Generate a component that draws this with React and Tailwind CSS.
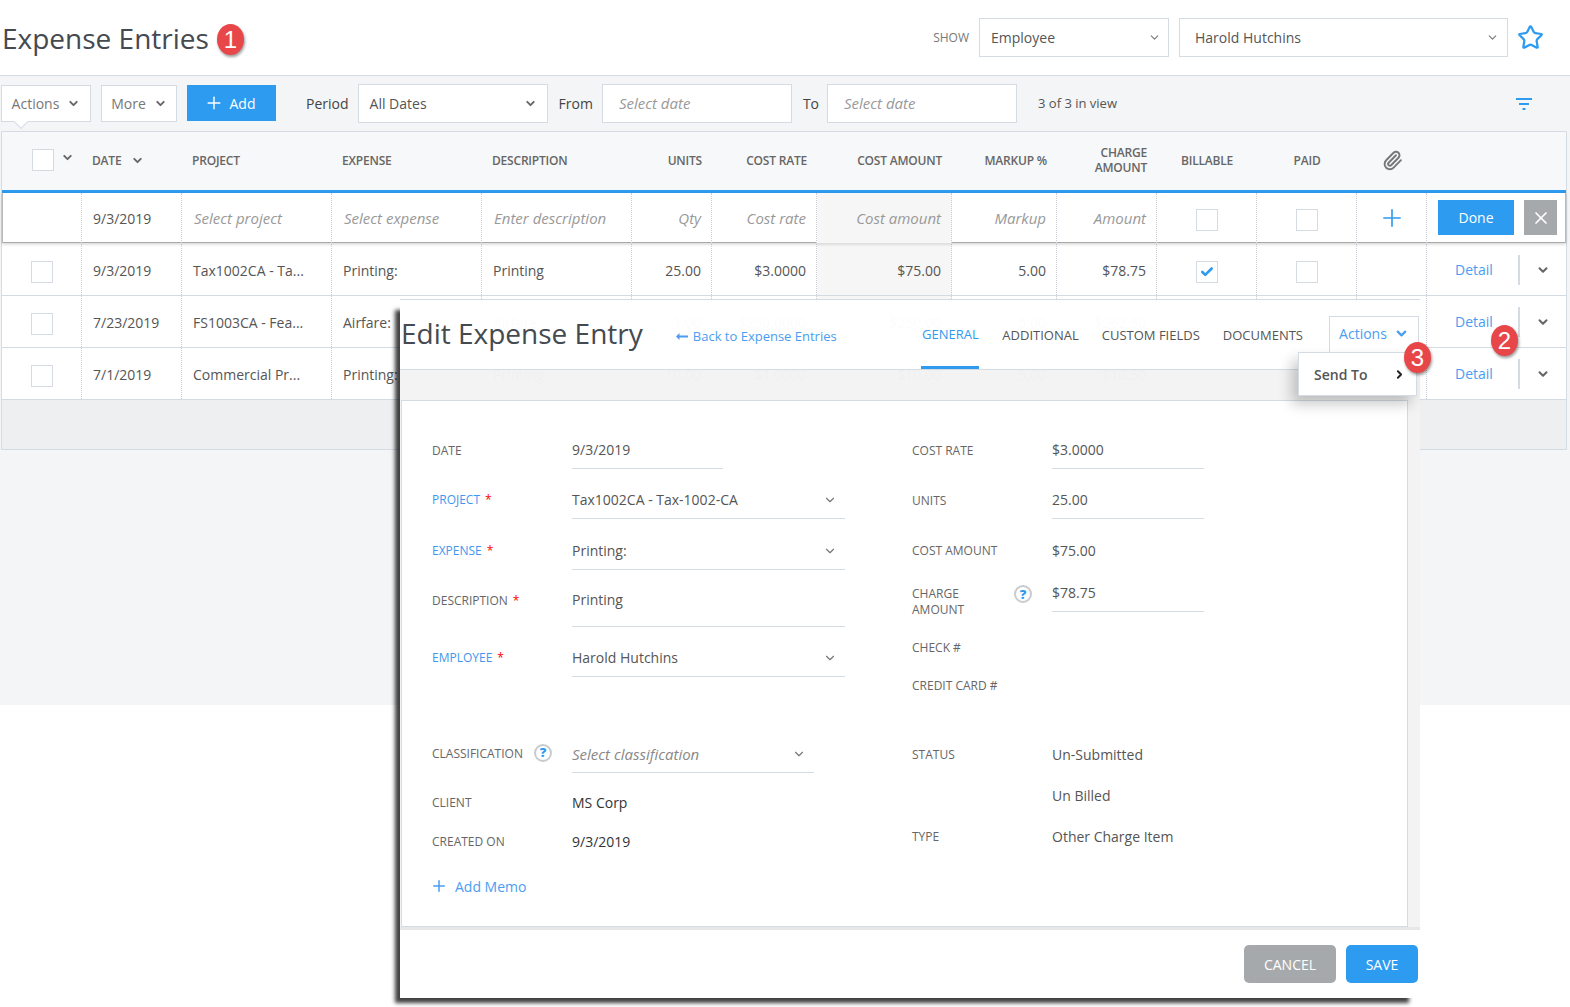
import { ChevronDown, ChevronRight, Check, Paperclip, Plus, Star, X } from 'lucide-react';

const COLS = 'grid grid-cols-[80px_100px_150px_150px_150px_80px_105px_135px_105px_100px_100px_100px_70px_139px]';

const ROWS = [
  { date: '9/3/2019', project: 'Tax1002CA - Ta...', expense: 'Printing:', desc: 'Printing', units: '25.00', rate: '$3.0000', cost: '$75.00', markup: '5.00', amount: '$78.75', billable: true },
  { date: '7/23/2019', project: 'FS1003CA - Fea...', expense: 'Airfare:', desc: 'Airfare', units: '1.00', rate: '$250.0000', cost: '$250.00', markup: '5.00', amount: '$262.50' },
  { date: '7/1/2019', project: 'Commercial Pr...', expense: 'Printing:', desc: 'Printing', units: '10.00', rate: '$1.0000', cost: '$10.00', markup: '5.00', amount: '$10.50' },
];

function Badge({ n, className }) {
  return (
    <div className={`absolute z-30 flex h-[31px] w-[27px] items-center justify-center rounded-[50%] bg-[#e8474a] text-[24px] text-white shadow-[1px_2px_3px_rgba(0,0,0,0.4)] font-['Liberation_Sans',sans-serif] ${className}`}>
      {n}
    </div>
  );
}

function Box({ checked, className = '' }) {
  return (
    <div className={`flex h-[22px] w-[22px] items-center justify-center border border-[#d5dbe3] bg-white ${className}`}>
      {checked && <Check size={14} strokeWidth={4.5} className="text-[#2d9bf0]" />}
    </div>
  );
}

function Help({ className = '' }) {
  return (
    <span className={`flex h-[18px] w-[18px] items-center justify-center rounded-full border-2 border-[#c8cbcf] text-[13px] font-extrabold text-[#2d9bf0] ${className}`}>?</span>
  );
}

function Cell({ children, className = '' }) {
  return <div className={`flex items-center border-r border-dotted border-[#c9ced6] ${className}`}>{children}</div>;
}

function Field({ label, value, req, blue, arrow, width = 'w-[273px]', height = 'h-[50px]', pad = 'pb-[8px]', lift = 'mb-px', muted }) {
  return (
    <div className={`flex items-end ${height}`}>
      <div className={`w-[140px] text-[12px] leading-5 ${pad} ${lift} ${blue ? 'text-[#3f97ee]' : 'text-[#666]'}`}>
        {label}
        {req && <span className="ml-[5px] text-[#f00]">*</span>}
      </div>
      <div className={`flex items-center justify-between border-b border-[#d5dbe3] leading-5 ${pad} ${width} ${muted ? 'text-[15px] italic text-[#888]' : 'text-[14px] text-[#555]'}`}>
        {value}
        {arrow && <ChevronDown size={14} className="mr-[8px] text-[#777]" />}
      </div>
    </div>
  );
}

function Info({ label, value, className = '', dark }) {
  return (
    <div className={`flex h-5 items-center text-[14px] leading-5 ${className}`}>
      <div className="w-[140px] text-[12px] text-[#666]">{label}</div>
      <div className={dark ? 'text-[#333]' : 'text-[#555]'}>{value}</div>
    </div>
  );
}

export default function App() {
  return (
    <div className="relative h-[1007px] w-[1570px] overflow-hidden bg-white text-[14px] text-[#555] font-['Open_Sans',sans-serif]">
      <header className="flex h-[76px] items-center border-b border-[#d5dbe3] pl-[2px]">
        <h1 className="pt-px text-[28px] leading-none text-[#454a50]">Expense Entries</h1>
        <span className="ml-auto mr-[10px] text-[12px] text-[#777]">SHOW</span>
        <div className="flex h-[39px] w-[190px] items-center justify-between border border-[#d5dbe3] pl-[11px] pr-[7px]">
          Employee <ChevronDown size={13} className="text-[#777]" />
        </div>
        <div className="ml-[10px] flex h-[39px] w-[329px] items-center justify-between border border-[#d5dbe3] pl-[15px] pr-[8px]">
          Harold Hutchins <ChevronDown size={13} className="text-[#777]" />
        </div>
        <Star size={27} strokeWidth={2} className="ml-[9px] mr-[26px] text-[#2d9bf0]" />
      </header>
      <Badge n="1" className="left-[217px] top-[24px]" />

      <div className="h-[629px] bg-[#f3f5f7]">
        <div className="flex h-[55px] items-center pl-px">
          <div className="relative flex h-[37px] w-[90px] items-center justify-center gap-[8px] border border-[#d5dbe3] bg-white text-[#777]">
            Actions <ChevronDown size={13} strokeWidth={3.5} className="text-[#666]" />
            <div className="absolute left-[14px] top-[31px] h-[10px] w-[10px] rotate-45 border-b border-r border-[#d5dbe3] bg-white" />
          </div>
          <div className="ml-[10px] flex h-[37px] w-[76px] items-center justify-center gap-[8px] border border-[#d5dbe3] bg-white text-[#777]">
            More <ChevronDown size={13} strokeWidth={3.5} className="text-[#666]" />
          </div>
          <div className="mb-px ml-[10px] flex h-[36px] w-[89px] items-center justify-center gap-[6px] bg-[#2d9bf0] pr-[4px] text-white">
            <Plus size={20} strokeWidth={1.7} /> Add
          </div>
          <span className="ml-[30px] text-[#444]">Period</span>
          <div className="ml-[9px] flex h-[39px] w-[190px] items-center justify-between border border-[#d5dbe3] bg-white pl-[11px] pr-[10px]">
            All Dates <ChevronDown size={13} strokeWidth={3.5} className="text-[#666]" />
          </div>
          <span className="ml-[11px] text-[#444]">From</span>
          <div className="ml-[9px] flex h-[39px] w-[190px] items-center border border-[#d5dbe3] bg-white pl-[16px] text-[15px] italic text-[#999]">Select date</div>
          <span className="ml-[11px] text-[#444]">To</span>
          <div className="ml-[8px] flex h-[39px] w-[190px] items-center border border-[#d5dbe3] bg-white pl-[16px] text-[15px] italic text-[#999]">Select date</div>
          <span className="ml-[21px] text-[13px]">3 of 3 in view</span>
          <svg width="16" height="12" viewBox="0 0 16 12" className="ml-auto mr-[38px] text-[#2d9bf0]" fill="currentColor">
            <rect width="16" height="2" />
            <rect x="3" y="5" width="10" height="2" />
            <rect x="6.5" y="10" width="3" height="2" />
          </svg>
        </div>

        <div className="ml-px w-[1566px] border border-[#d5dbe3] bg-white">
          <div className={`${COLS} h-[58px] items-center bg-[#f7f8f9] pb-[2px] text-[12px] font-semibold leading-[15px] tracking-[-0.2px] text-[#666]`}>
            <div className="flex items-center pl-[30px]">
              <Box />
              <ChevronDown size={13} strokeWidth={3.5} className="mb-[6px] ml-[7px] text-[#666]" />
            </div>
            <div className="flex items-center gap-[10px] pl-[10px]">DATE <ChevronDown size={13} strokeWidth={3.5} /></div>
            <div className="pl-[10px]">PROJECT</div>
            <div className="pl-[10px]">EXPENSE</div>
            <div className="pl-[10px]">DESCRIPTION</div>
            <div className="pr-[10px] text-right">UNITS</div>
            <div className="pr-[10px] text-right">COST RATE</div>
            <div className="pr-[10px] text-right">COST AMOUNT</div>
            <div className="pr-[10px] text-right">MARKUP %</div>
            <div className="pr-[10px] text-right">CHARGE<br />AMOUNT</div>
            <div className="text-center">BILLABLE</div>
            <div className="text-center">PAID</div>
            <div className="flex justify-center"><Paperclip size={21} strokeWidth={2.2} className="text-[#777]" /></div>
            <div />
          </div>

          <div className="h-[3px] bg-[#2d9bf0]" />

          <div className={`${COLS} relative z-10 mb-px h-[50px] bg-white text-[15px] italic text-[#999] shadow-[inset_1px_0_0_#bbb,inset_-1px_0_0_#bbb,inset_0_-1px_0_#aaa,0_1px_3px_rgba(0,0,0,0.2)]`}>
            <Cell />
            <Cell className="pl-[11px] text-[14px] not-italic text-[#555]">9/3/2019</Cell>
            <Cell className="pl-[12px]">Select project</Cell>
            <Cell className="pl-[12px]">Select expense</Cell>
            <Cell className="pl-[12px]">Enter description</Cell>
            <Cell className="justify-end pr-[10px]">Qty</Cell>
            <Cell className="justify-end pr-[10px]">Cost rate</Cell>
            <Cell className="justify-end bg-[#f6f6f6] pr-[10px]">Cost amount</Cell>
            <Cell className="justify-end pr-[10px]">Markup</Cell>
            <Cell className="justify-end pr-[10px]">Amount</Cell>
            <Cell className="justify-center"><Box className="ml-px mt-[4px]" /></Cell>
            <Cell className="justify-center"><Box className="ml-px mt-[4px]" /></Cell>
            <Cell className="justify-center"><Plus size={28} strokeWidth={1.4} className="text-[#2d9bf0]" /></Cell>
            <div className="flex items-center pb-px pl-[11px] text-[14px] not-italic">
              <div className="flex h-[35px] w-[76px] items-center justify-center bg-[#2d9bf0] text-white">Done</div>
              <div className="ml-[10px] flex h-[35px] w-[33px] items-center justify-center bg-[#a6a9ac] text-white"><X size={20} /></div>
            </div>
          </div>

          {ROWS.map((r) => (
            <div key={r.date} className={`${COLS} h-[52px] border-b border-[#d5dbe3]`}>
              <Cell className="pl-[29px] pt-[2px]"><Box className="mt-[2px]" /></Cell>
              <Cell className="pl-[11px] pt-[2px]">{r.date}</Cell>
              <Cell className="pl-[11px] pt-[2px]">{r.project}</Cell>
              <Cell className="pl-[11px] pt-[2px]">{r.expense}</Cell>
              <Cell className="pl-[11px] pt-[2px]">{r.desc}</Cell>
              <Cell className="justify-end pr-[10px] pt-[2px]">{r.units}</Cell>
              <Cell className="justify-end pr-[10px] pt-[2px]">{r.rate}</Cell>
              <Cell className="justify-end bg-[#f6f6f6] pr-[10px] pt-[2px]">{r.cost}</Cell>
              <Cell className="justify-end pr-[10px] pt-[2px]">{r.markup}</Cell>
              <Cell className="justify-end pr-[10px] pt-[2px]">{r.amount}</Cell>
              <Cell className="justify-center pt-[2px]"><Box checked={r.billable} className="ml-px mt-[2px]" /></Cell>
              <Cell className="justify-center pt-[2px]"><Box className="ml-px mt-[2px]" /></Cell>
              <Cell />
              <div className="flex items-center pl-[28px]">
                <span className="w-[63px] text-[#4a9df0]">Detail</span>
                <div className="h-[30px] w-[2px] bg-[#d5dbe3]" />
                <ChevronDown size={14} strokeWidth={3.5} className="ml-[16px] text-[#666]" />
              </div>
            </div>
          ))}

          <div className="h-[49px] bg-[#eeeff0]" />
        </div>
      </div>

      {/* edit window over the table */}
      <div className="absolute left-[400px] top-[299px] z-20 flex h-[699px] w-[1020px] flex-col shadow-[-8px_8px_4px_-3px_rgba(0,0,0,0.75)]">
        <div className="flex h-[71px] items-center border-b border-t border-[#d5dbe3] bg-white/[0.98] pr-px">
          <h2 className="mb-[4px] ml-px shrink-0 whitespace-nowrap text-[28px] leading-none text-[#454a50]">Edit Expense Entry</h2>
          <div className="ml-[33px] mt-[4px] flex shrink-0 items-center gap-[5px] whitespace-nowrap text-[13px] text-[#4a9df0]">
            <svg width="12" height="7" viewBox="0 0 12 7" fill="currentColor">
              <path d="M3.5 0 L0 3.5 L3.5 7 L3.5 4.5 L12 4.5 L12 2.5 L3.5 2.5 Z" />
            </svg>
            Back to Expense Entries
          </div>
          <div className="ml-auto flex h-full shrink-0 gap-[23px] whitespace-nowrap text-[13px] text-[#555]">
            <div className="flex w-[58px] items-center justify-center border-b-[3px] border-[#2d9bf0] pt-[3px] text-[#2d9bf0]">GENERAL</div>
            <div className="flex items-center pt-[3px]">ADDITIONAL</div>
            <div className="flex items-center pt-[3px]">CUSTOM FIELDS</div>
            <div className="flex items-center pt-[3px]">DOCUMENTS</div>
          </div>
          <div className="relative ml-[26px] mt-px flex h-[38px] w-[90px] shrink-0 items-center justify-center gap-[7px] border border-[#d5dbe3] pb-[4px] text-[#4a9df0]">
            Actions <ChevronDown size={15} strokeWidth={3.5} />
            <div className="absolute right-[1px] top-[35px] flex h-[44px] w-[119px] items-center justify-between border border-[#d5dbe3] bg-white pl-[15px] pr-[10px] font-semibold text-[#555] shadow-[-6px_8px_14px_rgba(0,0,0,0.22)]">
              Send To <ChevronRight size={13} strokeWidth={3.5} className="text-[#222]" />
            </div>
          </div>
        </div>
        <div className="h-[30px] bg-[#f3f3f3]/[0.98]" />
        <div className="flex h-[527px] bg-[#f3f3f3]">
          <div className="ml-[1px] flex w-[1007px] border border-[#d5dbe3] bg-white pl-[30px] pt-[33px]">
            <div className="w-[480px]">
              <Field label="DATE" value="9/3/2019" width="w-[151px]" height="h-[35px]" lift="" />
              <Field label="PROJECT" req blue arrow value="Tax1002CA - Tax-1002-CA" />
              <Field label="EXPENSE" req blue arrow value="Printing:" height="h-[51px]" />
              <Field label="DESCRIPTION" req value="Printing" height="h-[57px]" pad="pb-[16px]" lift="" />
              <Field label="EMPLOYEE" req blue arrow value="Harold Hutchins" />
              <div className="relative mt-[60px]">
                <Field label="CLASSIFICATION" muted arrow value="Select classification" width="w-[242px]" height="h-[36px]" />
                <div className="absolute left-[102px] top-[7px]"><Help /></div>
              </div>
              <Info label="CLIENT" value="MS Corp" dark className="mt-[20px]" />
              <Info label="CREATED ON" value="9/3/2019" dark className="mt-[19px]" />
              <div className="mt-[24px] -ml-[2px] flex h-5 items-center gap-[7px] text-[#4a9df0]">
                <Plus size={18} /> Add Memo
              </div>
            </div>
            <div>
              <Field label="COST RATE" value="$3.0000" width="w-[152px]" height="h-[35px]" lift="" />
              <Field label="UNITS" value="25.00" width="w-[152px]" lift="" />
              <Info label="COST AMOUNT" value="$75.00" className="mt-[22px]" />
              <div className="mt-[22px] flex h-[29px] items-start">
                <div className="flex w-[140px] items-start pt-[3px] text-[12px] leading-4 text-[#666]">
                  <span className="w-[102px]">CHARGE<br />AMOUNT</span>
                  <Help className="-mt-[1px]" />
                </div>
                <div className="h-full w-[152px] border-b border-[#d5dbe3] leading-5">$78.75</div>
              </div>
              <Info label="CHECK #" value="" className="mt-[26px]" />
              <Info label="CREDIT CARD #" value="" className="mt-[18px]" />
              <Info label="STATUS" value="Un-Submitted" className="mt-[49px]" />
              <Info label="" value="Un Billed" className="mt-[21px]" />
              <Info label="TYPE" value="Other Charge Item" className="mt-[21px]" />
            </div>
          </div>
        </div>
        <div className="h-[3px] bg-[#e6e7e8]" />
        <div className="flex flex-1 justify-end gap-[10px] bg-white pr-[2px] pt-[15px] text-white">
          <div className="flex h-[38px] w-[92px] items-center justify-center rounded-[5px] bg-[#a6a9ac]">CANCEL</div>
          <div className="flex h-[38px] w-[72px] items-center justify-center rounded-[5px] bg-[#2d9bf0]">SAVE</div>
        </div>
      </div>

      <Badge n="2" className="left-[1491px] top-[325px]" />
      <Badge n="3" className="left-[1404px] top-[342px]" />
    </div>
  );
}
